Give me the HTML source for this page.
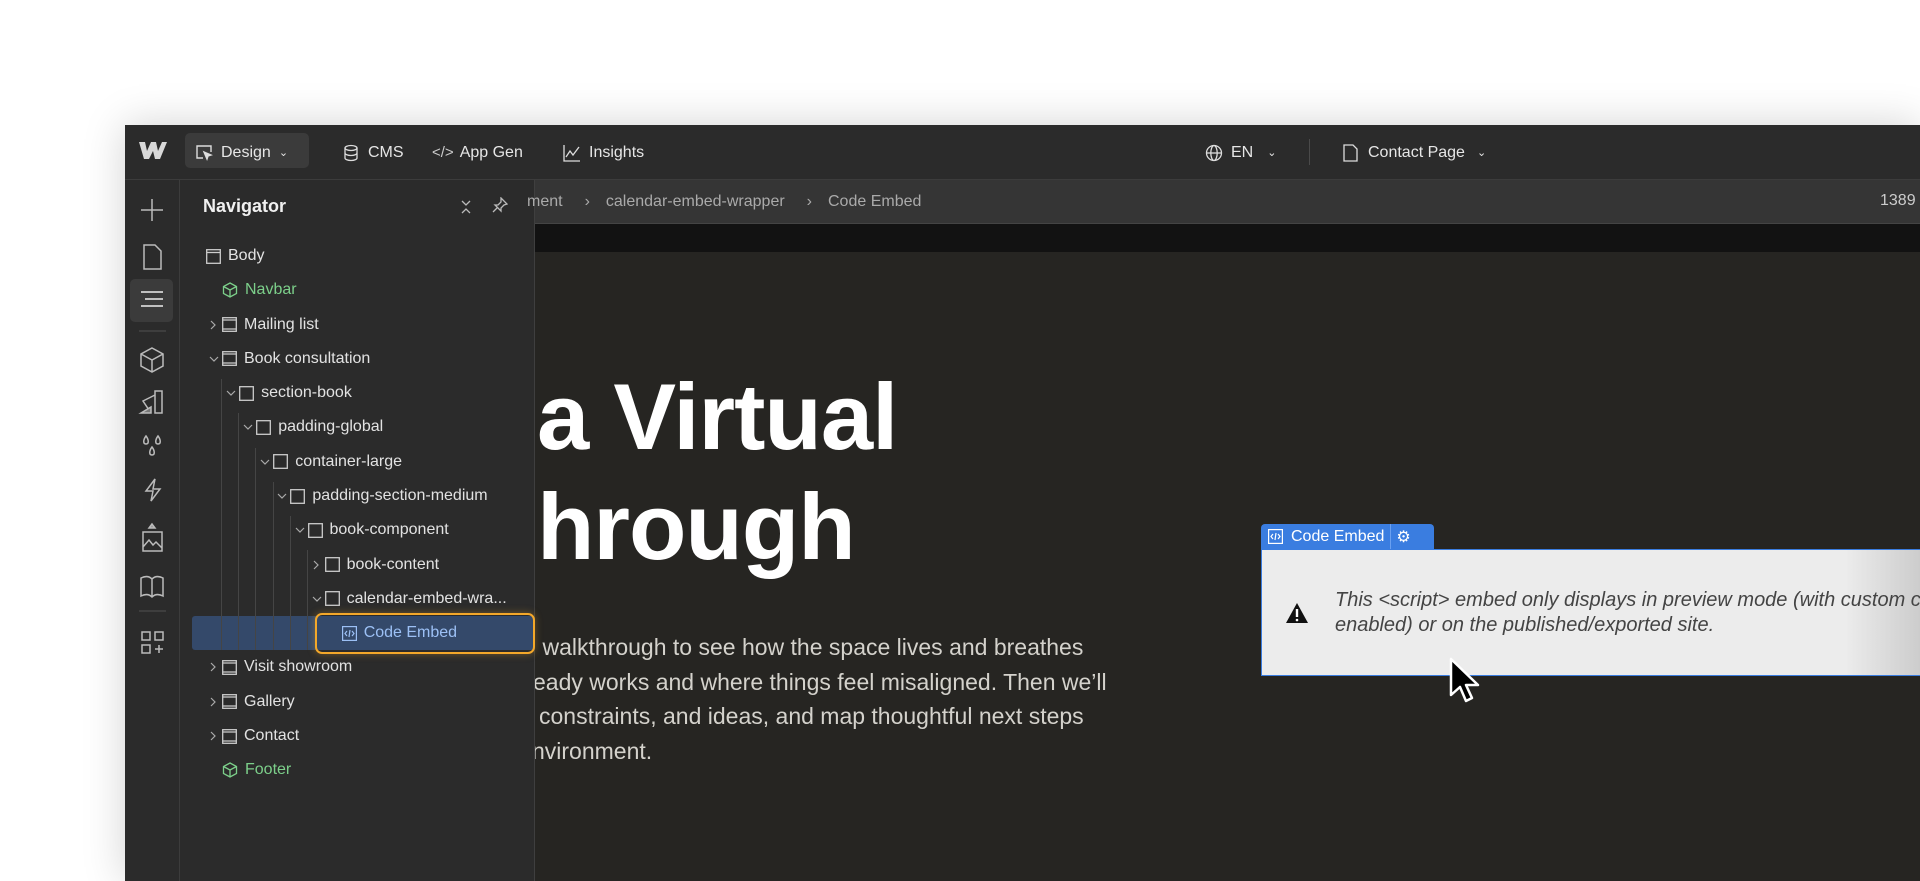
<!DOCTYPE html>
<html><head><meta charset="utf-8"><style>
*{margin:0;padding:0;box-sizing:border-box}
body{width:1920px;height:881px;overflow:hidden;background:#fff;font-family:"Liberation Sans",sans-serif;position:relative}
.win{position:absolute;left:125px;top:125px;width:1795px;height:756px;background:#262522;box-shadow:0 0 40px rgba(0,0,0,.18);overflow:hidden}
.abs{position:absolute}
.top{left:0;top:0;width:100%;height:55px;background:#2b2b2b;border-bottom:1px solid #3c3c3c}
.tb{position:absolute;top:0;height:55px;display:flex;align-items:center;color:#e6e6e6;font-size:16px}
.rail{left:0;top:55px;width:55px;height:701px;background:#2b2b2b;border-right:1px solid #3c3c3c}
.nav{left:55px;top:55px;width:355px;height:701px;background:#2b2b2b;border-right:1px solid #3f3f3f}
.row{position:absolute;height:34px;display:flex;align-items:center;font-size:16px;color:#e2e2e2;white-space:nowrap}
.bc{left:410px;top:55px;width:1400px;height:44px;background:#353535;border-bottom:1px solid #444;color:#aaa;font-size:16px}
svg{display:block}
</style></head><body>
<div class="win">
 <div class="abs top"></div>
 <svg class="abs" style="left:14px;top:17px" width="28" height="17" viewBox="0 0 28 17"><path d="M0 0h6l2 9 4-9h5l2 9 4-9h5l-7 17h-5l-2-8-4 8H5z" fill="#d8d8d8"/></svg>
 <div class="abs" style="left:60px;top:8px;width:124px;height:35px;background:#3b3b3b;border-radius:5px"></div>
 <div class="tb" style="left:70px"><svg width="18" height="18" viewBox="0 0 18 18" fill="none" stroke="#ddd" stroke-width="1.4"><path d="M8 14H2V2h14v6"/><path d="M9 8l7 3-3 1-1 3z" fill="#ddd"/></svg><span style="margin-left:8px">Design</span><span style="margin-left:8px;font-size:11px">&#8964;</span></div>
 <div class="tb" style="left:218px"><svg width="16" height="18" viewBox="0 0 16 18" fill="none" stroke="#ddd" stroke-width="1.3"><ellipse cx="8" cy="4" rx="6" ry="2.5"/><path d="M2 4v10c0 1.4 2.7 2.5 6 2.5s6-1.1 6-2.5V4M2 9c0 1.4 2.7 2.5 6 2.5s6-1.1 6-2.5"/></svg><span style="margin-left:9px">CMS</span></div>
 <div class="tb" style="left:307px"><span style="font-size:15px;color:#ccc">&lt;/&gt;</span><span style="margin-left:6px">App Gen</span></div>
 <div class="tb" style="left:438px"><svg width="18" height="18" viewBox="0 0 18 18" fill="none" stroke="#ddd" stroke-width="1.3"><path d="M1 1v16h16"/><path d="M3 13l4-6 3 4 6-8"/></svg><span style="margin-left:8px">Insights</span></div>
 <div class="tb" style="left:1080px"><svg width="18" height="18" viewBox="0 0 18 18" fill="none" stroke="#ddd" stroke-width="1.3"><circle cx="9" cy="9" r="7.5"/><ellipse cx="9" cy="9" rx="3.2" ry="7.5"/><path d="M1.5 9h15"/></svg><span style="margin-left:8px">EN</span><span style="margin-left:14px;font-size:11px">&#8964;</span></div>
 <div class="abs" style="left:1184px;top:14px;width:1px;height:26px;background:#4a4a4a"></div>
 <div class="tb" style="left:1218px"><svg width="15" height="18" viewBox="0 0 15 18" fill="none" stroke="#ddd" stroke-width="1.3"><path d="M1 1h9l4 4v12H1z"/></svg><span style="margin-left:10px">Contact Page</span><span style="margin-left:12px;font-size:11px">&#8964;</span></div>

 <div class="abs rail"></div>
 <div class="abs" style="left:5px;top:154px;width:43px;height:43px;background:#3b3b3b;border-radius:5px"></div>
 <svg class="abs" style="left:0;top:70px" width="55" height="560" viewBox="0 0 55 560" fill="none" stroke="#bbb" stroke-width="1.5">
  <path d="M27 4v22M16 15h22"/>
  <path d="M19 50h11l6 6v18H19z"/>
  <path d="M16 97h22M20 104h18M16 111h22" stroke="#eee"/>
  <path d="M14 136h27" stroke="#444"/>
  <path d="M27 153l11 6v12l-11 6-11-6v-12zM16 159l11 6 11-6M27 165v12"/>
  <path d="M30 196h7v22h-7zM30 200l-12 6 8 12" /><path d="M16 218l10-6v6z" fill="#777"/>
  <path d="M21 241c-3 4-3 8 0 8s3-4 0-8zM33 241c-3 4-3 8 0 8s3-4 0-8zM27 252c-3 4-3 8 0 8s3-4 0-8z"/>
  <path d="M30 284l-9 12h7l-2 10 9-12h-7z"/>
  <path d="M18 337h19v19H18zM18 352l6-7 4 5 3-3 6 6"/><path d="M27 329l-3 4h6z" fill="#999"/>
  <path d="M16 383c4-2 8-2 11 1 3-3 7-3 11-1v18c-4-2-8-2-11 1-3-3-7-3-11-1zM27 384v17"/>
  <path d="M14 416h27" stroke="#444"/>
  <path d="M17 437h8v8h-8zM30 437h8v8h-8zM17 450h8v8h-8zM34 450v8M30 454h8"/>
 </svg>

 <div class="abs nav"></div>
 <div class="abs" style="left:78px;top:71px;color:#f0f0f0;font-size:18px;font-weight:bold">Navigator</div>
 <svg class="abs" style="left:335px;top:75px" width="12" height="14" viewBox="0 0 12 14" fill="none" stroke="#bbb" stroke-width="1.3"><path d="M2 1l4 4 4-4M2 13l4-4 4 4"/></svg>
 <svg class="abs" style="left:367px;top:72px" width="16" height="16" viewBox="0 0 16 16" fill="none" stroke="#bbb" stroke-width="1.3"><path d="M9 1l6 6-3 1-3 3 0 3-6-6 3 0 3-3zM5 11l-4 4"/></svg>

 <div class="abs" style="left:67px;top:491px;width:343px;height:34px;background:#34496a;border-radius:3px"></div>
 <div id="lines"></div>
 <div class="abs" style="left:190px;top:488px;width:220px;height:41px;border:2px solid #f4a82a;border-radius:7px;box-shadow:0 0 8px rgba(244,168,42,.35)"></div>

 <div id="tree"></div>

 <div class="abs bc"></div>
 <div class="abs" style="left:410px;top:55px;height:44px;display:flex;align-items:center;color:#aaa;font-size:16px;white-space:nowrap">
  <span style="margin-left:-8px">ment</span><span style="margin-left:22px">&#8250;</span><span style="margin-left:16px">calendar-embed-wrapper</span><span style="margin-left:22px">&#8250;</span><span style="margin-left:16px">Code Embed</span></div>
 <div class="abs" style="left:1755px;top:67px;color:#ccc;font-size:16px">1389</div>
 <div class="abs" style="left:410px;top:99px;width:1400px;height:28px;background:#121212"></div>

 <div class="abs" style="left:410px;top:237px;width:1000px;height:260px;overflow:hidden">
  <div style="position:absolute;left:2px;top:0;color:#fff;font-size:94px;font-weight:bold;line-height:110px;letter-spacing:-1px">a Virtual<br>hrough</div>
 </div>
 <div class="abs" style="left:410px;top:505px;width:800px;overflow:hidden;color:#d4d2cc;font-size:23px;line-height:34.5px;white-space:nowrap">
  <div style="margin-left:-4px">l walkthrough to see how the space lives and breathes</div>
  <div style="margin-left:-2px">eady works and where things feel misaligned. Then we’ll</div>
  <div style="margin-left:4px">constraints, and ideas, and map thoughtful next steps</div>
  <div style="margin-left:-3px">nvironment.</div>
 </div>

 <div class="abs" style="left:1136px;top:399px;width:173px;height:25px;background:#3a7de0;border-radius:4px 4px 0 0;display:flex;align-items:center;color:#fff;font-size:16px">
  <svg style="margin-left:7px" width="15" height="15" viewBox="0 0 15 15" fill="none" stroke="#fff" stroke-width="1.2"><rect x=".6" y=".6" width="13.8" height="13.8"/><path d="M5 5l-2 2.5 2 2.5M10 5l2 2.5-2 2.5M8 4l-1 7"/></svg>
  <span style="margin-left:8px">Code Embed</span>
  <span style="margin-left:6px;width:1px;height:25px;background:#6aa0f0"></span>
  <span style="margin-left:5px;font-size:16px">&#9881;</span></div>
 <div class="abs" style="left:1136px;top:424px;width:680px;height:127px;border:1.5px solid #3a7de0;background:linear-gradient(90deg,#ececec 0,#ececec 86%,#c4c4c4 100%)"></div>
 <svg class="abs" style="left:1160px;top:477px" width="24" height="22" viewBox="0 0 24 22"><path d="M12 1L23 21H1z" fill="#111"/><path d="M12 7v8" stroke="#fff" stroke-width="2.4"/><circle cx="12" cy="18" r="1.3" fill="#fff"/></svg>
 <div class="abs" style="left:1210px;top:463px;color:#444;font-size:20px;font-style:italic;line-height:25px;white-space:nowrap">This &lt;script&gt; embed only displays in preview mode (with custom code<br>enabled) or on the published/exported site.</div>
 <svg class="abs" style="left:1324px;top:532px" width="34" height="48" viewBox="0 0 34 48"><path d="M2 2v36l9-8 6 14 6-3-6-13h12z" fill="#000" stroke="#fff" stroke-width="2.5" stroke-linejoin="round"/></svg>
</div>
<script>
var rows=[
[0,'body','Body',0],[1,'cube','Navbar',0],[1,'sec','Mailing list','r'],[1,'sec','Book consultation','d'],
[2,'box','section-book','d'],[3,'box','padding-global','d'],[4,'box','container-large','d'],[5,'box','padding-section-medium','d'],
[6,'box','book-component','d'],[7,'box','book-content','r'],[7,'box','calendar-embed-wra...','d'],[8,'code','Code Embed',0],
[1,'sec','Visit showroom','r'],[1,'sec','Gallery','r'],[1,'sec','Contact','r'],[1,'cube','Footer',0]];
var icons={
body:'<svg width="15" height="15" viewBox="0 0 15 15" fill="none" stroke="#ccc" stroke-width="1.3"><rect x=".7" y=".7" width="13.6" height="13.6"/><path d="M.7 3.5h13.6"/></svg>',
sec:'<svg width="15" height="15" viewBox="0 0 15 15" fill="none" stroke="#ccc" stroke-width="1.3"><rect x=".7" y=".7" width="13.6" height="13.6"/><path d="M.7 3h13.6M.7 12h13.6"/></svg>',
box:'<svg width="15" height="15" viewBox="0 0 15 15" fill="none" stroke="#ccc" stroke-width="1.3"><rect x=".7" y=".7" width="13.6" height="13.6"/></svg>',
cube:'<svg width="16" height="16" viewBox="0 0 16 16" fill="none" stroke="#7ccf8a" stroke-width="1.3"><path d="M8 1l6.5 3.5v7L8 15l-6.5-3.5v-7zM1.5 4.5L8 8l6.5-3.5M8 8v7"/></svg>',
code:'<svg width="15" height="15" viewBox="0 0 15 15" fill="none" stroke="#9cc0f5" stroke-width="1.2"><rect x=".6" y=".6" width="13.8" height="13.8"/><path d="M5 5l-2 2.5 2 2.5M10 5l2 2.5-2 2.5M8 4l-1 7"/></svg>'};
var chR='<svg width="8" height="10" viewBox="0 0 8 10" fill="none" stroke="#aaa" stroke-width="1.2"><path d="M2 1l4 4-4 4"/></svg>';
var chD='<svg width="10" height="8" viewBox="0 0 10 8" fill="none" stroke="#aaa" stroke-width="1.2"><path d="M1 2l4 4 4-4"/></svg>';
var h='';
rows.forEach(function(r,i){
 var lvl=r[0],x=(lvl==0?81:97+(lvl-1)*17.1),y=114+i*34.29;
 var col=r[1]=='cube'?'#7ccf8a':(r[1]=='code'?'#9cc0f5':'#e2e2e2');
 var ch=r[3]=='r'?chR:(r[3]=='d'?chD:'');
 h+='<div class="row" style="left:'+(x-13)+'px;top:'+y+'px;color:'+col+'"><span style="width:13px;display:flex;align-items:center">'+ch+'</span>'+icons[r[1]]+'<span style="margin-left:7px">'+r[2]+'</span></div>';
});
document.getElementById('tree').innerHTML=h;
var l='';
for(var k=0;k<6;k++){var t=254+k*34.29;l+='<div class="abs" style="left:'+(96+17.2*k)+'px;top:'+t+'px;width:1px;height:'+(525-t)+'px;background:#454545"></div>';}
document.getElementById('lines').innerHTML=l;
</script>
</body></html>
